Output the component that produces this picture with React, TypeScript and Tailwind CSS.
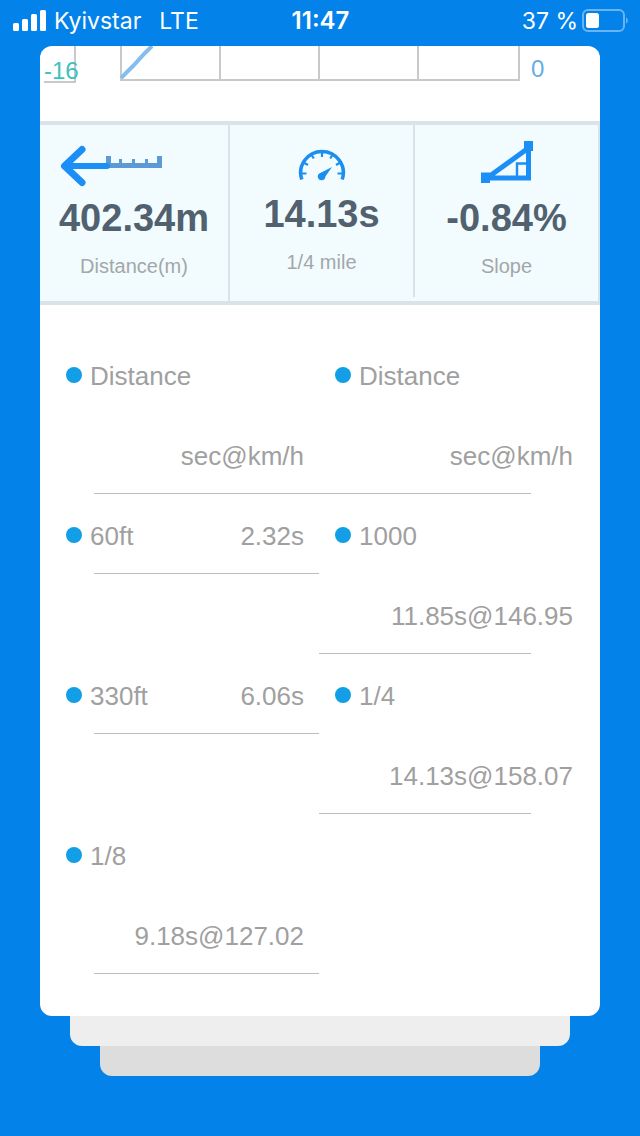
import type { ReactNode } from 'react'
import clsx from 'clsx'

interface Split {
  name: string
  value: string
}

const LEFT_SPLITS: Split[] = [
  { name: '60ft',  value: '2.32s' },
  { name: '330ft', value: '6.06s' },
  { name: '1/8',   value: '9.18s@127.02' },
]

const RIGHT_SPLITS: Split[] = [
  { name: '1000', value: '11.85s@146.95' },
  { name: '1/4',  value: '14.13s@158.07' },
]

function StatusBar() {
  return (
    <header className="grid h-[46px] grid-cols-[1fr_auto_1fr] items-center pl-[13px] pr-3 pb-1 font-[Inter,sans-serif] text-[23px] leading-8 text-white">
      <div className="flex items-center">
        <svg width="33" height="22" viewBox="0 0 33 22" fill="white" aria-hidden="true">
          <rect x="0" y="13" width="6" height="8" rx="1.5" />
          <rect x="9" y="9" width="6" height="12" rx="1.5" />
          <rect x="18" y="4" width="6" height="17" rx="1.5" />
          <rect x="27" y="0" width="6" height="21" rx="1.5" />
        </svg>
        <span className="ml-2">Kyivstar</span>
        <span className="ml-[18px]">LTE</span>
      </div>
      <time className="text-2xl font-semibold">11:47</time>
      <div className="flex items-center justify-end gap-1">
        <span>37 %</span>
        <svg width="46" height="24" viewBox="0 0 46 24" aria-hidden="true">
          <rect x="1" y="1" width="41" height="21" rx="5" fill="none" stroke="#69b5f3" strokeWidth="2" />
          <rect x="4" y="4" width="13" height="15" rx="2.5" fill="white" />
          <path d="M44 8.5c2.4 1 2.4 5 0 6z" fill="#69b5f3" />
        </svg>
      </div>
    </header>
  )
}

function ChartTail() {
  return (
    <svg viewBox="0 0 560 75" className="block w-full" role="img" aria-label="Run chart">
      <g fill="none" stroke="#c9c9c9" strokeWidth="2">
        <path d="M35 0V36H4" />
        <path d="M81 0V34H479V0M180 0V34M279 0V34M378 0V34" />
      </g>
      <path d="M81 32L93 20L105 7L112 0" fill="none" stroke="#86bdec" strokeWidth="4" />
      <g className="font-['Liberation_Sans',sans-serif] text-[24px]">
        <text x="4" y="33" fill="#3fc1bd">-16</text>
        <text x="491" y="31" fill="#62aee6">0</text>
      </g>
    </svg>
  )
}

function DistanceIcon() {
  return (
    <svg width="148" height="57" viewBox="0 0 148 57" fill="none" aria-hidden="true">
      <path d="M46 29V19H51V26H59V22H62V26H72V22H75V26H85V22H88V26H97V19H102V31H46Z" fill="#5c9ad6" />
      <g stroke="#1b8ff5" strokeLinecap="round" strokeLinejoin="round">
        <path d="M47 29H5" strokeWidth="6" />
        <path d="M22 12.5L4.5 29L22 45.5" strokeWidth="7" />
      </g>
    </svg>
  )
}

function GaugeIcon() {
  return (
    <svg width="48" height="57" viewBox="0 0 48 57" fill="none" stroke="#1b8ff0" aria-hidden="true">
      <path d="M3.8 46.5A21.3 21.3 0 1 1 44.2 46.5" strokeWidth="3.6" />
      <path
        d="M3 40.5H8.5M39.5 40.5H45M5.5 29.5L10 32M42.5 29.5L38 32M13 21L15.8 25.5M35 21L32.2 25.5M24 18V24"
        strokeWidth="2.2"
      />
      <path d="M34 34L27.4 43.6A3.8 3.8 0 1 1 21.8 40.2Z" fill="#1b8ff0" stroke="none" />
    </svg>
  )
}

function SlopeIcon() {
  return (
    <svg width="52" height="57" viewBox="0 0 52 57" fill="none" stroke="#1b8ff5" aria-hidden="true">
      <path d="M6 41L47.5 11V41Z" strokeWidth="5" />
      <path d="M36 41V26.5H48" strokeWidth="2.4" />
      <path d="M0 35.5H9V46H0ZM43 4H52V14H43Z" fill="#1b8ff5" stroke="none" />
    </svg>
  )
}

interface StatProps {
  icon: ReactNode
  value: string
  label: string
  short?: boolean
}

function Stat({ icon, value, label, short }: StatProps) {
  return (
    <div
      className={clsx(
        'flex flex-col items-center border-r-2 border-[#dae3e7]',
        short ? 'h-[172px] pt-2' : 'h-44 pt-3',
      )}
    >
      {icon}
      <p className="text-[38px] leading-[48px] font-bold text-[#51616f]">{value}</p>
      <p className="text-xl leading-[48px] text-[#a3a7a9]">{label}</p>
    </div>
  )
}

function SplitTable({ rows, side }: { rows: Split[]; side: 'left' | 'right' }) {
  // value drops under the name when the two don't fit on one line
  const row = clsx(
    'flex min-h-40 flex-wrap content-start justify-between gap-x-4',
    "after:-mt-[3px] after:h-px after:basis-full after:bg-[#bcbcbc] after:content-['']",
    side === 'left' ? 'after:ml-7 after:-mr-[15px]' : 'after:-ml-4 after:mr-[42px]',
  )
  const name = 'flex h-20 items-center gap-2 font-normal'
  const value = 'ml-auto flex h-20 items-center font-normal'
  const dot = <span className="mb-0.5 size-4 rounded-full bg-[#129fe6]" />

  return (
    <table className="block pr-4 pl-[15px]">
      <thead className="block">
        <tr className={row}>
          <th className={name}>{dot}Distance</th>
          <th className={value}>sec@km/h</th>
        </tr>
      </thead>
      <tbody className="block">
        {rows.map(r => (
          <tr key={r.name} className={row}>
            <td className={name}>{dot}{r.name}</td>
            <td className={value}>{r.value}</td>
          </tr>
        ))}
      </tbody>
    </table>
  )
}

export default function App() {
  return (
    <div className="min-h-screen bg-[#0382ea] pb-[60px] font-['Liberation_Sans',Arial,sans-serif]">
      <StatusBar />

      <main className="mx-10">
        <div className="overflow-hidden rounded-xl bg-white">
          <ChartTail />

          <section className="grid grid-cols-[190fr_185fr_185fr] items-start border-y-4 border-[#dae3e7] bg-[#f2fcfe]">
            <Stat icon={<DistanceIcon />} value="402.34m" label="Distance(m)" />
            <Stat icon={<GaugeIcon />} value="14.13s" label="1/4 mile" short />
            <Stat icon={<SlopeIcon />} value="-0.84%" label="Slope" />
          </section>

          <section className="grid grid-cols-2 items-start px-[11px] pt-[31px] pb-10 text-[26px] text-[#a0a0a0]">
            <SplitTable rows={LEFT_SPLITS} side="left" />
            <SplitTable rows={RIGHT_SPLITS} side="right" />
          </section>
        </div>

        {/* cards stacked underneath */}
        <div className="mx-[30px] h-[30px] rounded-b-xl bg-[#eeeeee]" />
        <div className="mx-[60px] h-[30px] rounded-b-xl bg-[#dddddd]" />
      </main>
    </div>
  )
}
